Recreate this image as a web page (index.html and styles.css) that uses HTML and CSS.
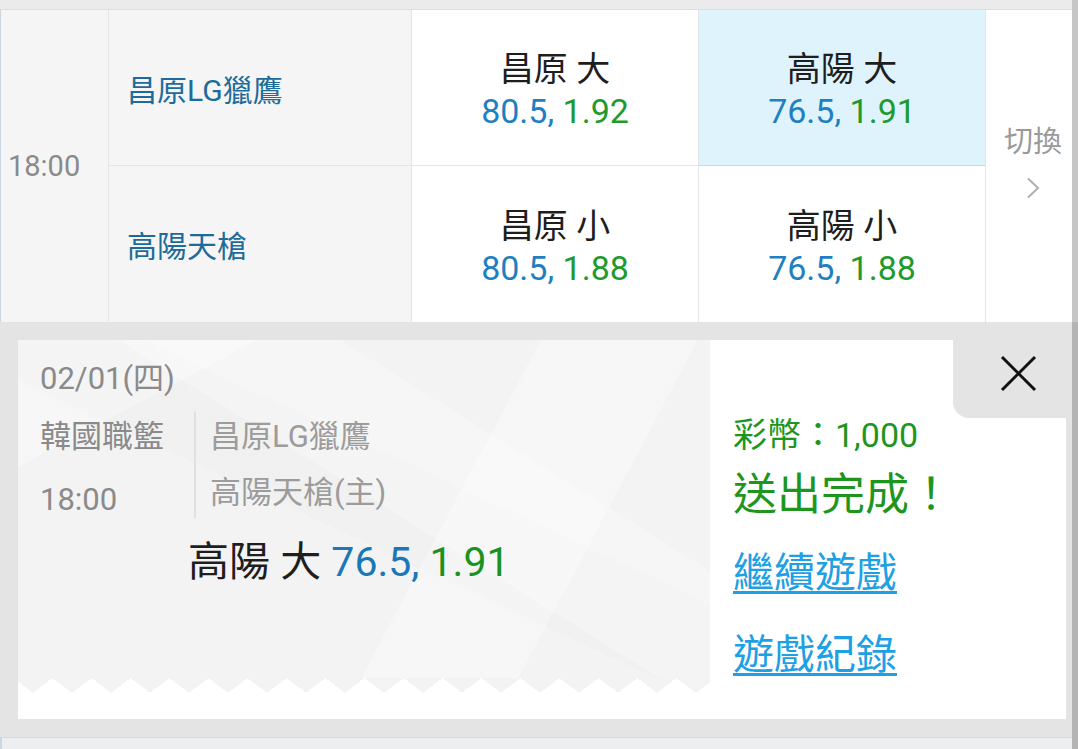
FILE: index.html
```html
<!DOCTYPE html>
<html lang="zh-Hant">
<head>
<meta charset="utf-8">
<title>投注完成</title>
<link rel="stylesheet" href="styles.css">
</head>
<body>
<div class="screen">
  <div class="main">
    <div class="topbar"></div>
    <div class="board">
      <div class="cell time">18:00</div>
      <div class="cell team r1">昌原LG獵鷹</div>
      <div class="cell odd c3 r1"><span class="pick">昌原 大</span><span class="line"><span class="hcp">80.5,</span> <span class="price">1.92</span></span></div>
      <div class="cell odd c4 r1 selected"><span class="pick">高陽 大</span><span class="line"><span class="hcp">76.5,</span> <span class="price">1.91</span></span></div>
      <div class="cell switch">
        <span class="switch-label">切換</span>
        <svg class="chevron" width="14" height="22" viewBox="0 0 14 22"><polyline points="2,1.5 12,11 2,20.5" fill="none" stroke="#b0b0b0" stroke-width="2"/></svg>
      </div>
      <div class="cell team r2">高陽天槍</div>
      <div class="cell odd c3 r2"><span class="pick">昌原 小</span><span class="line"><span class="hcp">80.5,</span> <span class="price">1.88</span></span></div>
      <div class="cell odd c4 r2"><span class="pick">高陽 小</span><span class="line"><span class="hcp">76.5,</span> <span class="price">1.88</span></span></div>
    </div>
    <div class="overlay">
      <div class="overlay-inner">
        <div class="modal">
          <div class="ticket">
            <div class="ticket-body">
              <div class="date">02/01(四)</div>
              <div class="match">
                <div class="league">
                  <div class="league-name">韓國職籃</div>
                  <div class="league-time">18:00</div>
                </div>
                <div class="teams">
                  <div class="team-a">昌原LG獵鷹</div>
                  <div class="team-b">高陽天槍(主)</div>
                </div>
              </div>
              <div class="bet">高陽 大 <span class="hcp">76.5,</span> <span class="price">1.91</span></div>
            </div>
            <div class="ticket-edge"></div>
            <div class="ticket-foot"></div>
          </div>
          <div class="result">
            <div class="coins">彩幣：1,000</div>
            <div class="done">送出完成！</div>
            <a class="link first" href="#">繼續遊戲</a>
            <a class="link second" href="#">遊戲紀錄</a>
          </div>
          <button class="close" type="button" aria-label="關閉">
            <svg width="37" height="37" viewBox="0 0 37 37"><path d="M2 2 L35 35 M35 2 L2 35" stroke="#111" stroke-width="3" fill="none"/></svg>
          </button>
        </div>
      </div>
      <div class="footer-strip"></div>
    </div>
  </div>
  <div class="scrollbar">
    <div class="bar-top"></div>
    <div class="bar-bottom"></div>
  </div>
</div>
</body>
</html>
```

FILE: styles.css
```css
* { box-sizing: border-box; }

html, body {
  margin: 0;
  padding: 0;
}

body {
  width: 1078px;
  height: 749px;
  overflow: hidden;
  font-family: Roboto, "Noto Sans CJK TC", sans-serif;
  background: #ffffff;
  color: #222222;
}

.screen {
  display: flex;
  width: 1078px;
  height: 749px;
}

.main {
  width: 1072px;
  display: flex;
  flex-direction: column;
}

.topbar {
  height: 10px;
  background: #ebebeb;
  border-bottom: 1px solid #d6dfe5;
}

/* ---------- odds board ---------- */
.board {
  display: grid;
  grid-template-columns: 109px 303px 287px 287px 1fr;
  grid-template-rows: 156px 156px;
}

.cell {
  border-right: 1px solid #e1e6ea;
  border-bottom: 1px solid #e1e6ea;
  background: #ffffff;
}

.r1 { grid-row: 1; }
.r2 { grid-row: 2; border-bottom: none; }
.c3 { grid-column: 3; }
.c4 { grid-column: 4; }

.time {
  grid-column: 1;
  grid-row: 1 / span 2;
  background: #f5f5f5;
  border-left: 1px solid #c9d6df;
  border-bottom: none;
  display: flex;
  align-items: center;
  padding-left: 7px;
  font-size: 29px;
  color: #8a8a8a;
}

.team {
  grid-column: 2;
  background: #f5f5f5;
  display: flex;
  align-items: center;
  padding: 0 0 0 18px;
  font-size: 30px;
  color: #1d6b9a;
}

.odd {
  display: flex;
  flex-direction: column;
  align-items: center;
  justify-content: center;
  padding-top: 5px;
  font-size: 34px;
  line-height: 42px;
}

.odd.selected {
  background: #dff3fd;
  border-bottom-color: #c5dbe7;
}

.pick { color: #1e1e1e; }

.hcp { color: #1f7fc0; }
.price { color: #1f9a2c; }

.switch {
  grid-column: 5;
  grid-row: 1 / span 2;
  border-right: none;
  border-bottom: none;
  display: flex;
  flex-direction: column;
  align-items: center;
  justify-content: center;
  padding: 0 0 10px 8px;
}

.switch-label {
  font-size: 29px;
  line-height: 36px;
  color: #9a9a9a;
}

.chevron {
  display: block;
  margin-top: 17px;
}

/* ---------- overlay & modal ---------- */
.overlay {
  flex: 1;
  display: flex;
  flex-direction: column;
  background: #e4e4e4;
}

.overlay-inner {
  padding: 18px 6px 18px 18px;
}

.footer-strip {
  flex: 1;
  background: #eceeef;
  border-top: 1px solid #d2dadf;
  border-left: 2px solid #c8d8e2;
}

.modal {
  position: relative;
  height: 379px;
  display: flex;
  background: #ffffff;
}

.ticket {
  width: 692px;
  display: flex;
  flex-direction: column;
}

.ticket-body {
  flex: 1;
  padding: 19px 0 0 22px;
  background-color: #f3f3f3;
  background-image:
    linear-gradient(152deg, rgba(255,255,255,0.3) 0 18%, transparent 18%),
    linear-gradient(32deg, transparent 0 52%, rgba(255,255,255,0.25) 52% 70%, transparent 70%),
    linear-gradient(118deg, transparent 0 60%, rgba(255,255,255,0.3) 60% 78%, transparent 78%),
    linear-gradient(205deg, transparent 0 40%, rgba(236,236,236,0.35) 40% 55%, transparent 55%);
}

.ticket-edge {
  height: 15px;
  background-color: #ffffff;
  background-image: conic-gradient(from 0deg at 50% 0, #f3f3f3 0deg 127deg, transparent 127deg 233deg, #f3f3f3 233deg);
  background-size: 39px 15px;
  background-position: 15px 0;
  background-repeat: repeat-x;
}

.ticket-foot {
  height: 26px;
  background: #ffffff;
}

.date {
  font-size: 31px;
  line-height: 40px;
  color: #8a8a8a;
}

.match {
  margin-top: 13px;
  display: flex;
  align-items: flex-start;
  font-size: 31px;
  line-height: 50px;
}

.league {
  width: 154px;
  color: #8a8a8a;
}

.league-time { margin-top: 13px; }

.teams {
  height: 106px;
  border-left: 2px solid #e0e0e0;
  padding-left: 14px;
  color: #9c9c9c;
}

.team-b { margin-top: 6px; }

.bet {
  margin-top: 12px;
  padding-left: 148px;
  font-size: 41px;
  line-height: 50px;
  color: #1e1e1e;
}

.bet .hcp { color: #1a77b8; }
.bet .price { color: #1b911f; }

.result {
  flex: 1;
  display: flex;
  flex-direction: column;
  align-items: flex-start;
  padding: 75px 0 0 23px;
}

.coins {
  font-size: 34px;
  line-height: 40px;
  color: #1e961e;
}

.done {
  margin-top: 15px;
  font-size: 44px;
  line-height: 50px;
  color: #1e961e;
}

.link {
  font-size: 41px;
  line-height: 50px;
  color: #1ea0e4;
  text-decoration: underline;
  text-decoration-thickness: 3px;
  text-underline-offset: 4px;
}

.link.first { margin-top: 28px; }
.link.second { margin-top: 32px; }

.close {
  position: absolute;
  top: 0;
  right: 0;
  width: 113px;
  height: 78px;
  margin: 0;
  border: none;
  padding: 15px 29px 26px 47px;
  background: #e4e4e4;
  border-bottom-left-radius: 16px;
}

.close svg { display: block; }

/* ---------- scrollbar ---------- */
.scrollbar {
  width: 6px;
  display: flex;
  flex-direction: column;
}

.bar-top {
  height: 322px;
  background: #c6c6c6;
}

.bar-bottom {
  flex: 1;
  background: #b4b4b4;
}
```
